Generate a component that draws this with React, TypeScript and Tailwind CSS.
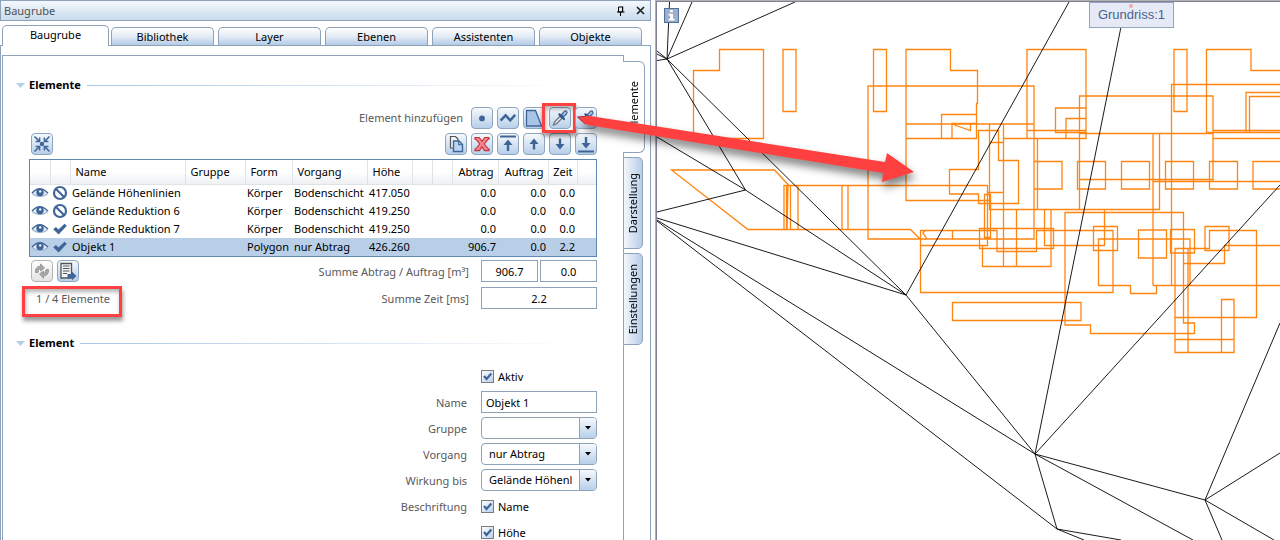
import type { ReactNode } from "react";

const BLUE = "#3f6598";

/* ---------- icons ---------- */

function Icon({ children, size = 20 }: { children: ReactNode; size?: number }) {
  return (
    <svg width={size} height={size} viewBox="0 0 20 20" fill="none" aria-hidden="true">
      {children}
    </svg>
  );
}

const CollapseIcon = () => (
  <Icon>
    <circle cx="10" cy="10" r="2.2" fill={BLUE} />
    <path d="M2.5 2.5 7 7M17.5 2.5 13 7M2.5 17.5 7 13M17.5 17.5 13 13" stroke={BLUE} strokeWidth="1.6" />
    <path d="M3.6 7.4h4V3.4M16.4 7.4h-4V3.4M3.6 12.6h4v4M16.4 12.6h-4v4" stroke={BLUE} strokeWidth="1.5" />
  </Icon>
);
const PointIcon = () => (
  <Icon>
    <circle cx="10" cy="10.4" r="2.9" fill={BLUE} />
  </Icon>
);
const PolylineIcon = () => (
  <Icon>
    <path d="M2.6 12.6 7.6 7.4l4.6 5 5-5.6" stroke={BLUE} strokeWidth="2.5" />
  </Icon>
);
const PolygonIcon = () => (
  <Icon>
    <path d="M2.5 2.5h9L17.500 18h-15z" fill="#a9c5e6" stroke={BLUE} strokeWidth="1.3" />
  </Icon>
);
const DropperIcon = ({ brush = false }: { brush?: boolean }) => (
  <Icon>
    {brush && <path d="M1.500 9 9 8.500l5 2-5 5.500z" fill="#e2505a" stroke="#b02030" />}
    {!brush && (
      <path d="M3.500 17 4.500 14 10 8.200l2 2-5.700 5.700z" fill="#e8edf3" stroke="#6f7680" strokeWidth="1.300" />
    )}
    <path d="m9.400 6.400 4.600 4.600" stroke="#2f5486" strokeWidth="2.200" strokeLinecap="round" />
    <path d="M11.600 6.600 14 3.600q1.700-1.400 2.700-.3 1 1-.3 2.700l-2.800 2.700z" fill="#a9c5e6" stroke="#3f6598" strokeWidth="1.200" />
  </Icon>
);
const CopyIcon = () => (
  <Icon>
    <path d="M4.500 2.500h5l2.500 2.600V14H4.500z" fill="#eef3f9" stroke="#555" strokeWidth="1.200" />
    <path d="M7.500 7h5.500l3.500 3.500V17.500h-9z" fill="#bcd4f0" stroke={BLUE} strokeWidth="1.400" />
    <path d="M12.700 7.200v3.500h3.500" stroke={BLUE} strokeWidth="1.100" />
  </Icon>
);
const DeleteIcon = () => (
  <Icon>
    <path
      d="M3 3.500h4.300L10 7.300l2.700-3.800H17v1.600h-.8L12.300 10l4.100 5H17v1.600h-4.500L10 12.800l-2.500 3.800H3V15h.700l4-5-3.900-4.900H3z"
      fill="#f4858c"
      stroke="#c4303c"
      strokeWidth="1.100"
    />
  </Icon>
);
const ArrowIcon = ({ down = false, bar = false }: { down?: boolean; bar?: boolean }) => (
  <Icon>
    <g transform={down ? "rotate(180 10 10)" : undefined}>
      {bar && <path d="M2 2.500h16" stroke={BLUE} strokeWidth="2" />}
      <path
        d={bar ? "M10 5.500 14.500 11H11.200v6H8.800v-6H5.500z" : "M10 4.500 14.500 10H11.200v5.500H8.800V10H5.500z"}
        fill={BLUE}
      />
    </g>
  </Icon>
);
const RefreshIcon = () => (
  <Icon>
    <path d="M3.500 11.500q-.5-6 5-6.500V2.800L12.500 7 8.500 10V7.800q-2.700.2-2.500 3.700z" fill="#a9a9a9" stroke="#888" strokeWidth=".7" />
    <path d="M16.500 8.500q.5 6-5 6.500v2.200L7.500 13l4-3v2.200q2.700-.2 2.500-3.700z" fill="#a9a9a9" stroke="#888" strokeWidth=".7" />
  </Icon>
);
const ListExportIcon = () => (
  <Icon>
    <path d="M3 2.500h10.500v14.500H3z" fill="#f4f6f8" stroke="#555" strokeWidth="1.300" />
    <path d="M5 5h6.500M5 7.500h6.500M5 10h6.500M5 12.500h4" stroke="#555" />
    <path d="M9.500 13H14v-2.200l4.500 4.200-4.500 4.200V17H9.500z" fill={BLUE} />
  </Icon>
);
const EyeIcon = () => (
  <svg width="18" height="12" viewBox="0 0 18 12" aria-hidden="true">
    <path d="M1 6.500Q8.500-1 17 6.500 9 12.500 1 6.500z" fill="#e3ebf5" />
    <path d="M1 6.300Q8.500-2.600 17 6.300" fill="none" stroke={BLUE} strokeWidth="1.500" />
    <path d="M1.500 7Q9 12 16.500 7" fill="none" stroke="#9db3cf" strokeWidth="1.100" />
    <circle cx="9" cy="5.500" r="3.700" fill={BLUE} />
    <circle cx="9.200" cy="4.400" r="1.200" fill="#fff" />
  </svg>
);
const BanIcon = () => (
  <svg width="16" height="16" viewBox="0 0 16 16" fill="none" aria-hidden="true">
    <circle cx="8" cy="8" r="6" stroke={BLUE} strokeWidth="2.200" />
    <path d="m4 4 8 8" stroke={BLUE} strokeWidth="2.200" />
  </svg>
);
const CheckIcon = () => (
  <svg width="16" height="14" viewBox="0 0 16 14" aria-hidden="true">
    <path d="M1.200 7.300 4 4.900l2.400 2.700L12.600 1.700l2.200 2L6.600 12.500z" fill={BLUE} />
  </svg>
);

/* ---------- controls ---------- */

function ToolButton({ label, children, muted = false }: { label: string; children: ReactNode; muted?: boolean }) {
  return (
    <button
      type="button"
      aria-label={label}
      className={
        muted
          ? "flex size-[22px] items-center justify-center overflow-hidden rounded border border-[#b4b4b4] bg-linear-to-b from-white to-[#e4e4e4]"
          : "flex size-[22px] items-center justify-center overflow-hidden rounded border border-[#8ea5c0] bg-linear-to-b from-[#f6f9fc] to-[#b7cfe9]"
      }
    >
      {children}
    </button>
  );
}

function SectionHeading({ children }: { children: ReactNode }) {
  return (
    <div className="flex items-center pr-12 pl-[13px]">
      <svg width="9" height="5" viewBox="0 0 9 5" aria-hidden="true">
        <path d="M0 0h9L4.500 5z" fill="#b5cee8" />
      </svg>
      <h2 className="ml-1 leading-4 font-bold text-black">{children}</h2>
      <div className="ml-1.5 h-px flex-1 bg-linear-to-r from-[#a9c6e4] to-white" />
    </div>
  );
}

function CheckBox({ id, label }: { id: string; label: string }) {
  return (
    <div className="flex h-[22px] items-center gap-1">
      <span className="grid size-[13px]">
        <input
          id={id}
          type="checkbox"
          defaultChecked
          className="peer col-start-1 row-start-1 size-[13px] appearance-none border border-[#7c7c7c] bg-linear-to-br from-white to-[#b9cfe8]"
        />
        <svg
          viewBox="0 0 13 13"
          className="pointer-events-none invisible col-start-1 row-start-1 size-[13px] peer-checked:visible"
          aria-hidden="true"
        >
          <path d="m3 6 2.500 3L10.300 3.500" fill="none" stroke={BLUE} strokeWidth="2.200" />
        </svg>
      </span>
      <label htmlFor={id} className="pt-px text-black">
        {label}
      </label>
    </div>
  );
}

function SelectBox({ id, options }: { id: string; options: string[] }) {
  return (
    <div className="relative h-[22px] overflow-hidden rounded-[4px] border border-[#8ea2b9] bg-white">
      <select id={id} className="h-5 w-full appearance-none bg-transparent pr-[17px] pl-[7px] text-black">
        {options.map((o) => (
          <option key={o}>{o}</option>
        ))}
      </select>
      <span className="pointer-events-none absolute inset-y-0 right-0 flex w-[17px] items-center justify-center border-l border-[#8ea2b9] bg-linear-to-b from-[#f6f9fc] to-[#b7cfe9]">
        <svg width="6" height="4" viewBox="0 0 6 4" aria-hidden="true">
          <path d="M0 0h6L3 3.600z" fill="#000" />
        </svg>
      </span>
    </div>
  );
}

/* ---------- element table ---------- */

const columns = [
  { title: "", width: 20, right: false },
  { title: "", width: 20, right: false },
  { title: "Name", width: 115, right: false },
  { title: "Gruppe", width: 60, right: false },
  { title: "Form", width: 47, right: false },
  { title: "Vorgang", width: 75, right: false },
  { title: "Höhe", width: 45, right: false },
  { title: "", width: 20, right: false },
  { title: "", width: 20, right: false },
  { title: "Abtrag", width: 46, right: true },
  { title: "Auftrag", width: 50, right: true },
  { title: "Zeit", width: 29, right: true },
  { title: "", width: 19, right: false },
];

const rows = [
  { on: false, cells: ["Gelände Höhenlinien", "", "Körper", "Bodenschicht", "417.050", "", "", "0.0", "0.0", "0.0", ""] },
  { on: false, cells: ["Gelände Reduktion 6", "", "Körper", "Bodenschicht", "419.250", "", "", "0.0", "0.0", "0.0", ""] },
  { on: true, cells: ["Gelände Reduktion 7", "", "Körper", "Bodenschicht", "419.250", "", "", "0.0", "0.0", "0.0", ""] },
  { on: true, cells: ["Objekt 1", "", "Polygon", "nur Abtrag", "426.260", "", "", "906.7", "0.0", "2.2", ""] },
];

function ElementTable() {
  return (
    <div className="border border-[#5f88b5] bg-white">
      <table className="w-full table-fixed border-collapse text-black">
        <colgroup>
          {columns.map((c, i) => (
            <col key={i} style={{ width: c.width }} />
          ))}
        </colgroup>
        <thead>
          <tr className="h-6 bg-linear-to-b from-white from-50% to-[#eef0f2]">
            {columns.map((c, i) => (
              <th
                key={i}
                className={
                  c.right
                    ? "border-r border-b border-[#e0e3e6] px-1 py-0 text-right font-normal whitespace-nowrap"
                    : "border-r border-b border-[#e0e3e6] py-0 pr-0 pl-[5px] text-left font-normal whitespace-nowrap last:border-r-0"
                }
              >
                {c.title}
              </th>
            ))}
          </tr>
        </thead>
        <tbody>
          {rows.map((r, i) => (
            <tr key={i} className={i === 3 ? "h-[18px] bg-[#b8cfe7]" : "h-[18px]"}>
              <td className="p-0 pl-px">
                <EyeIcon />
              </td>
              <td className="p-0 pl-0.5">{r.on ? <CheckIcon /> : <BanIcon />}</td>
              {r.cells.map((c, j) => (
                <td
                  key={j}
                  className={
                    columns[j + 2].right
                      ? "py-0 pr-0.5 pl-0 text-right leading-4 whitespace-nowrap"
                      : "py-0 pr-0 pl-0.5 leading-4 whitespace-nowrap"
                  }
                >
                  {c}
                </td>
              ))}
            </tr>
          ))}
        </tbody>
      </table>
    </div>
  );
}

/* ---------- side panel ---------- */

const tabs = ["Bibliothek", "Layer", "Ebenen", "Assistenten", "Objekte"];

function TabStrip() {
  return (
    <div role="tablist" className="flex h-[25px] shrink-0 items-end border-b border-[#8ea2b9] pl-0.5">
      <button
        type="button"
        role="tab"
        aria-selected="true"
        className="-mb-px h-[21px] w-[107px] rounded-t-[5px] border border-b-0 border-[#8ea2b9] bg-white pb-0.5 leading-4 text-black"
      >
        Baugrube
      </button>
      <div className="ml-0.5 flex gap-1">
        {tabs.map((t) => (
          <button
            key={t}
            type="button"
            role="tab"
            aria-selected="false"
            className="h-[18px] w-[103px] rounded-t-[5px] border border-b-0 border-[#8ea2b9] bg-linear-to-b from-white via-[#e3ebf5] to-[#b3cbe6] leading-4 text-black"
          >
            {t}
          </button>
        ))}
      </div>
    </div>
  );
}

const addTools: { label: string; icon: ReactNode; marked?: boolean }[] = [
  { label: "Punkt", icon: <PointIcon /> },
  { label: "Linienzug", icon: <PolylineIcon /> },
  { label: "Polygon", icon: <PolygonIcon /> },
  { label: "Pipette", icon: <DropperIcon />, marked: true },
  { label: "Pipette Fläche", icon: <DropperIcon brush /> },
];

const editTools: { label: string; icon: ReactNode }[] = [
  { label: "Kopieren", icon: <CopyIcon /> },
  { label: "Löschen", icon: <DeleteIcon /> },
  { label: "Ganz nach oben", icon: <ArrowIcon bar /> },
  { label: "Nach oben", icon: <ArrowIcon /> },
  { label: "Nach unten", icon: <ArrowIcon down /> },
  { label: "Ganz nach unten", icon: <ArrowIcon down bar /> },
];

function FormRow({ id, label, children }: { id?: string; label?: string; children: ReactNode }) {
  return (
    <div className="flex gap-3.5">
      <label htmlFor={id} className="flex-1 pt-1 text-right leading-4 text-[#595959]">
        {label}
      </label>
      <div className="w-[116px]">{children}</div>
    </div>
  );
}

function PanelContent() {
  const sumBox = "h-[22px] min-w-0 flex-1 border border-[#8ea2b9] bg-white text-center text-black";
  return (
    <div className="min-w-0 flex-1 border-t border-l border-[#8ea2b9] bg-white pt-[21px]">
      <SectionHeading>Elemente</SectionHeading>
      <div className="px-[26px]">
        <div className="mt-3.5 flex items-center justify-end gap-1">
          <span className="mr-1 text-[#595959]">Element hinzufügen</span>
          {addTools.map((t) => (
            <div key={t.label} className="relative">
              <ToolButton label={t.label}>{t.icon}</ToolButton>
              {t.marked && (
                <div className="pointer-events-none absolute -top-1 -right-[5px] -bottom-1 -left-[7px] border-3 border-[#ff4040] shadow-[1px_3px_4px_rgba(0,0,0,0.45),inset_1px_3px_4px_rgba(0,0,0,0.3)]" />
              )}
            </div>
          ))}
        </div>
        <div className="mt-1 mb-1 flex justify-between pl-0.5">
          <ToolButton label="Zoom auf Element">
            <CollapseIcon />
          </ToolButton>
          <div className="flex gap-1">
            {editTools.map((t) => (
              <ToolButton key={t.label} label={t.label}>
                {t.icon}
              </ToolButton>
            ))}
          </div>
        </div>
        <ElementTable />
        <div className="mt-[3px] flex pl-0.5">
          <div className="flex gap-1">
            <ToolButton label="Aktualisieren" muted>
              <RefreshIcon />
            </ToolButton>
            <ToolButton label="Liste ausgeben">
              <ListExportIcon />
            </ToolButton>
          </div>
          <label htmlFor="sumA" className="mr-3 ml-auto pt-1 leading-4 text-[#595959]">
            Summe Abtrag / Auftrag [m³]
          </label>
          <div className="flex w-[116px] gap-0.5">
            <input id="sumA" readOnly defaultValue="906.7" className={sumBox} />
            <input aria-label="Summe Auftrag" readOnly defaultValue="0.0" className={sumBox} />
          </div>
        </div>
        <div className="mt-[5px] flex">
          <div className="relative ml-[7px] pt-1 leading-4 text-[#595959]">
            1 / 4 Elemente
            <div className="pointer-events-none absolute -top-px -left-3.5 h-[31px] w-[100px] border-3 border-[#ff4040] shadow-[1px_4px_4px_rgba(0,0,0,0.4),inset_1px_3px_4px_rgba(0,0,0,0.3)]" />
          </div>
          <label htmlFor="sumZ" className="mr-3 ml-auto pt-1 leading-4 text-[#595959]">
            Summe Zeit [ms]
          </label>
          <div className="flex w-[116px]">
            <input id="sumZ" readOnly defaultValue="2.2" className={sumBox} />
          </div>
        </div>
      </div>
      <div className="mt-[26px]">
        <SectionHeading>Element</SectionHeading>
      </div>
      <div className="mt-[14px] flex flex-col gap-1 pr-[26px]">
        <FormRow>
          <CheckBox id="aktiv" label="Aktiv" />
        </FormRow>
        <FormRow id="name" label="Name">
          <input
            id="name"
            defaultValue="Objekt 1"
            className="h-[22px] w-full border border-[#8ea2b9] bg-white pl-1 text-black"
          />
        </FormRow>
        <FormRow id="gruppe" label="Gruppe">
          <SelectBox id="gruppe" options={[""]} />
        </FormRow>
        <FormRow id="vorgang" label="Vorgang">
          <SelectBox id="vorgang" options={["nur Abtrag"]} />
        </FormRow>
        <FormRow id="wirkung" label="Wirkung bis">
          <SelectBox id="wirkung" options={["Gelände Höhenl"]} />
        </FormRow>
        <FormRow id="b-name" label="Beschriftung">
          <CheckBox id="b-name" label="Name" />
        </FormRow>
        <FormRow>
          <CheckBox id="b-hoehe" label="Höhe" />
        </FormRow>
      </div>
    </div>
  );
}

function SideRail() {
  const tab =
    "flex h-[92px] w-5 items-center justify-center rounded-r-[5px] border border-[#8ea2b9] bg-linear-to-r from-[#f4f7fb] to-[#b7cde8] text-black";
  return (
    <div className="flex w-[27px] shrink-0 flex-col">
      <div className="h-[6px] border-l border-[#8ea2b9]" />
      <button
        type="button"
        className="flex h-[92px] w-[22px] items-center justify-center rounded-r-[6px] border border-l-0 border-[#8ea2b9] bg-white pb-1 text-black"
      >
        <span className="rotate-180 [writing-mode:vertical-rl]">Elemente</span>
      </button>
      <div className="h-1 border-l border-[#8ea2b9]" />
      <button type="button" className={tab}>
        <span className="rotate-180 [writing-mode:vertical-rl]">Darstellung</span>
      </button>
      <div className="h-1 border-l border-[#8ea2b9]" />
      <button type="button" className={tab}>
        <span className="rotate-180 [writing-mode:vertical-rl]">Einstellungen</span>
      </button>
      <div className="flex-1 border-l border-[#8ea2b9]" />
    </div>
  );
}

function SidePanel() {
  return (
    <aside className="flex w-[651px] shrink-0 flex-col bg-white">
      <header className="flex h-[21px] shrink-0 items-center border border-[#8ea2b9] bg-linear-to-b from-[#f3f8fd] to-[#c9dbec] pr-[5px] pl-[3px]">
        <h1 className="flex-1 leading-4 text-[#505050]">Baugrube</h1>
        <button type="button" aria-label="Anheften" className="mr-[11px]">
          <svg width="8" height="10" viewBox="0 0 8 10" aria-hidden="true">
            <path d="M1.500 1h4v5h-4z" fill="none" stroke="#000" />
            <path d="M5 .500h1.200V6H5zM0 5.500h7.500v1H0zM3 6h1v4H3z" fill="#000" />
          </svg>
        </button>
        <button type="button" aria-label="Schließen">
          <svg width="9" height="9" viewBox="0 0 9 9" aria-hidden="true">
            <path d="m1 1 7 7M8 1 1 8" stroke="#222" strokeWidth="1.700" />
          </svg>
        </button>
      </header>
      <TabStrip />
      <div className="flex min-h-0 flex-1 border-x border-[#8ea2b9] pt-[9px] pl-px">
        <PanelContent />
        <SideRail />
      </div>
    </aside>
  );
}

/* ---------- plan view ---------- */

const terrain = [
  "M667 59 669.500 2M667 59 692 2M667 59 795 2M657 51 667 59M657 54 667 59M657 60.500 667 59",
  "M667 59 745.500 190M667 59 906 295M657 137 745.500 190 906 295M745.500 190 657 212",
  "M657 218 906 295M657 220 1035 454M657 221 1057 529M906 295 1035 454M906 295 1069 2",
  "M1035 454 1126 2M1035 454 1280 185M1035 454 1205 500M1035 454 1193 540M1035 454 1057 529",
  "M1057 529 1084 540M1057 529 1121 540M1205 500 1280 323M1205 500 1280 453M1205 500 1274 540M1205 500 1222 540",
].join("");

const outlines = [
  "M693.500 70.500H719.500V49.500H763.500V138.500H693.500z",
  "M783 49.500H796V111.500H783zM873.500 49.500H886.500V111.500H873.500z",
  "M868 86H1034V239H868z",
  "M990 200.500H906V49.500H950.500V70.500H977.500V103.500H976.500V138.500H906M906 124H1034",
  "M941.500 138.500V114.500H976.500M952 138.500V123.500H976M952 124 970.500 130.500V123.500",
  "M949.500 169.500H978.500V130.500H998.500V160.500H1018.500V203.500H978.500V194H949.500z",
  "M1027 49.500H1086V138.500H1027zM1027 130.500H1086M1003.500 138.500H1086",
  "M1086 108H1055.500V132.500H1086M1086 118.500H1066V138.500",
  "M989.500 124V209.500H1159.500V133.500M1003.500 124V266.500M989.500 142.500H1003.500M988 192.500H1003.500M1037.500 138.500V209.500",
  "M1034 161.500H1062V189H1034zM1077.500 161.500H1105.500V189H1077.500zM1121.500 161.500H1149.500V189H1121.500z",
  "M1165.500 161.500H1193.500V189H1165.500zM1209.500 161.500H1237.500V189H1209.500zM1280 161.500H1253V189H1280",
  "M1079.500 209.500V96H1213V181.500M1079.500 133.500H1213M1079.500 179.500H1213M1153 181.500H1280",
  "M1153 133.500V285.500M1280 84.500H1171.500V285.500M1174 49.500H1187V111.500H1174z",
  "M1280 132.500H1206.500V49.500H1251V70.500H1280M1213 130.500H1280M1213 138.500H1280",
  "M1280 92.500H1246V132.500M1280 96.500H1249.500V132.500",
  "M789 185.500 774.500 170H671.500L748 229.500H910.500L920 239",
  "M784 229.500V185.500H987.500V245.500H920.500M786.500 185.500V229.500M788 185.500 787 229.500M790.500 185.500V229.500M798 185.500V229.500M842 185.500V229.500M848 185.500V229.500",
  "M920.500 230.500H997V251.500H1036.500V230.500H1113V292.500H920.500z",
  "M925 230.500 923 233 927 239H952.500V230.500",
  "M979.500 228.500H1053.500V248.500H979.500zM984.500 194.500H990.500V237.500H984.500z",
  "M982.500 245.500V266.500H1051V209.500M1016.500 209.500V266.500M1044.500 209.500V245.500H1104.500V209.500",
  "M1065 212.500H1183.500V323H1194.500V333.500H1090.500V325H1065z",
  "M1093.500 226.500H1117.500V250.500H1093.500zM1138.500 230H1166.500V258H1138.500z",
  "M1190 285.500V239H1098.500V285.500H1130.500V293.500H1156.500V285.500H1280M1153 285.500H1157",
  "M1170.500 229.500H1194.500V253H1170.500zM1205 226.500H1229V250.500H1205z",
  "M1175 317.500H1256.500V230.500H1209.500V248.500H1175V352.500H1234V299.500H1221.500V352.500M1175 339.500H1234M1188 248.500V352.500",
  "M1183.500 263.500H1224.500V245.500H1280M952.500 302.500H1081V320.500H952.500z",
].join("");

function PlanView() {
  return (
    <main className="relative min-w-0 flex-1 overflow-hidden border-t border-l border-[#80849a] bg-white">
      <svg className="absolute inset-0 size-full" aria-hidden="true">
        <g transform="translate(-657 -2)" fill="none">
          <path d={outlines} stroke="#ff8410" strokeWidth="1.300" />
          <path d={terrain} stroke="#000" strokeWidth=".9" />
        </g>
      </svg>
      <button
        type="button"
        aria-label="Info"
        className="absolute top-[6px] left-[7px] flex size-[15px] items-center justify-center border border-[#4f709f] bg-[#9dafc9]"
      >
        <svg width="9" height="11" viewBox="0 0 9 11" aria-hidden="true">
          <path d="M3 0h2.800v2.200H3zM1.500 3.700h4.500v5h1.500v1.800H1.500V8.700h1.700V5.400H1.500z" fill="#fff" />
        </svg>
      </button>
      <div className="absolute top-0 left-[432px] flex h-[26px] w-[85px] items-center justify-center border border-[#94a4bd] bg-[#e6eaf6] font-['Liberation_Sans',sans-serif] text-[13px] text-[#47628e]">
        <span className="absolute top-px left-[39px] size-1 rounded-full bg-[#f2a9b3]" />
        Grundriss:1
      </div>
    </main>
  );
}

export default function App() {
  return (
    <div className="relative flex h-screen overflow-hidden bg-[#fbfbfc] font-['Noto_Sans','Open_Sans',sans-serif] text-[11px] leading-4">
      <SidePanel />
      <div className="ml-1 flex min-w-0 flex-1 border-t border-l border-[#b0b0b0]">
        <PlanView />
      </div>
      <svg
        className="pointer-events-none absolute top-0 left-0 h-[240px] w-[960px] drop-shadow-[2px_6px_4px_rgba(0,0,0,0.5)]"
        viewBox="0 0 960 240"
        aria-hidden="true"
      >
        <path d="M582 120q2-5 8-4L885 162l2-9 27 19-32 10 1-9L588 125q-5-1-6-5z" fill="#ff4040" />
      </svg>
    </div>
  );
}
